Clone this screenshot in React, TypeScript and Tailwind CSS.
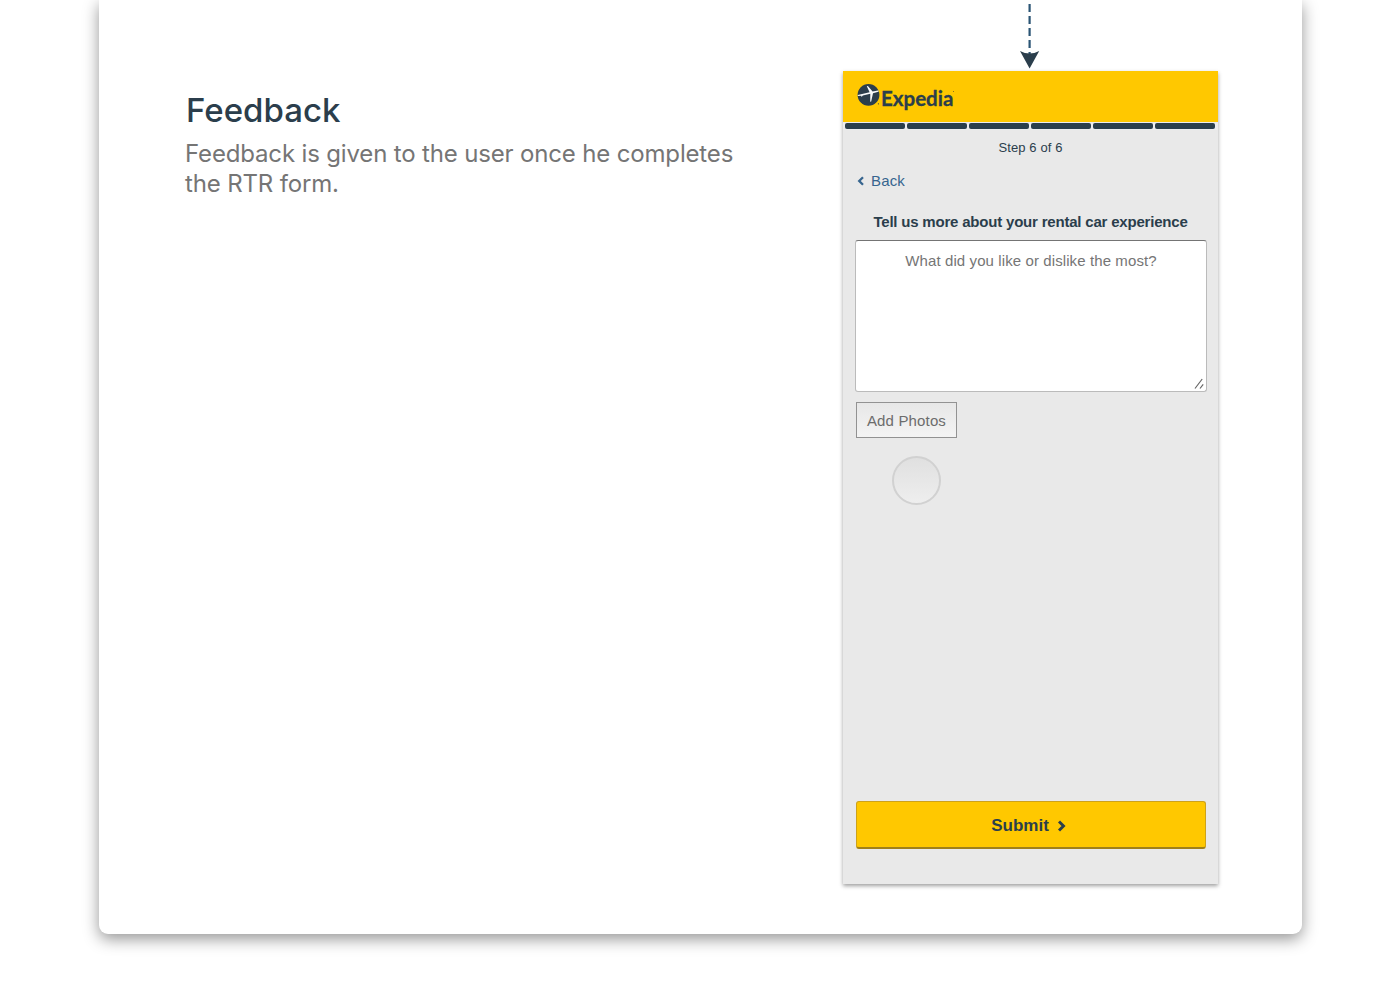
import React from "react";

function Logo() {
  return (
    <div className="flex h-[30px] items-start text-[#2b3e4c]">
      <svg width="24" height="24" viewBox="0 0 24 24" className="block shrink-0">
        <circle cx="11.5" cy="11.9" r="10.9" fill="currentColor" />
        <circle cx="21.4" cy="20.8" r="0.6" fill="currentColor" />
        <path
          d="M0.8 12.1 L12.6 9.2 L9.8 3.2 L10.9 2.9 L15.6 8.6 L21 7.6 Q22.6 7.7 21.4 8.7 L16 10.2 L14.2 18.6 L13.2 18.8 L13.3 10.8 L5.8 12.5 L4.6 14 L4.2 12.8 L0.8 13.1 Z"
          fill="#f7fafb"
        />
      </svg>
      <span className="mt-[3px] whitespace-nowrap font-['Lato',sans-serif] text-[20.5px] font-bold leading-[24px] tracking-[0px] [-webkit-text-stroke:0.3px_#2b3e4c]">
        Expedia
      </span>
      <span className="mt-[8px] h-px w-px bg-[#8a7524]" />
    </div>
  );
}

function Phone() {
  return (
    <section className="flex h-[813px] w-[375px] flex-col bg-[#e9e9e9] font-['Liberation_Sans',Arial,sans-serif] text-[#2b3e4c] shadow-[0_2px_4px_rgba(0,0,0,0.38)]">
      <header className="h-[51px] shrink-0 bg-[#ffc800] pl-[14px] pt-[12px]">
        <Logo />
      </header>
      <div className="flex h-[8px] shrink-0 gap-[2px] bg-[#ececef] pb-px pl-[2px] pr-[3px] pt-px">
        {[1, 2, 3, 4, 5, 6].map((step) => (
          <span key={step} className="flex-1 rounded-[2px] bg-[#2b3e4c]" />
        ))}
      </div>
      <p className="mt-[10px] text-center text-[13px] leading-[16px] tracking-[0.1px]">Step 6 of 6</p>
      <a className="ml-[14px] mt-[16px] flex h-[18px] items-center gap-[7px] text-[15px] leading-[18px] tracking-[0.15px] text-[#37658f]">
        <svg width="7" height="10" viewBox="0 0 7 10" className="block">
          <path d="M6 1.2 L2.2 5 L6 8.8" fill="none" stroke="currentColor" strokeWidth="2.3" />
        </svg>
        Back
      </a>
      <h2 className="mt-[23px] whitespace-nowrap text-center text-[15px] font-bold leading-[17px] tracking-[-0.2px]">
        Tell us more about your rental car experience
      </h2>
      <div className="relative ml-[12px] mt-[10px] h-[152px] w-[352px] shrink-0 rounded-[3px] border border-[#bbbbbb] border-t-[#747474] bg-white pt-[11px] text-center text-[15px] leading-[18px] tracking-[0.1px] text-[#757575]">
        What did you like or dislike the most?
        <svg width="10" height="11" viewBox="0 0 10 11" className="absolute bottom-[2px] right-[2px]">
          <path d="M1 10.5 L8.2 1 M6 10.5 L9.2 6.3" stroke="#666666" strokeWidth="1.2" />
        </svg>
      </div>
      <button className="ml-[13px] mt-[10px] h-[36px] w-[101px] shrink-0 whitespace-nowrap border border-[#929292] bg-linear-to-b from-[#e7e7e7] to-[#f4f4f4] pt-[2px] text-[15px] leading-[18px] tracking-[0.15px] text-[#6c6c6c]">
        Add Photos
      </button>
      <span className="ml-[48px] mt-[17px] flex size-[50px] shrink-0 items-center justify-center">
        <span className="size-[49px] rounded-full border-[2px] border-[#d1d1d1] bg-linear-to-b from-[#e0e0e0] to-[#eeeeee]" />
      </span>
      <button className="mb-[35px] ml-[13px] mt-auto flex h-[48px] w-[350px] shrink-0 items-center justify-center gap-[8px] rounded-[3px] border border-b-2 border-[#cda21a] border-b-[#a08018] bg-[#ffc800] pr-[5px] pt-[2px] text-[17px] font-bold">
        Submit
        <svg width="9" height="12" viewBox="0 0 9 12" className="block">
          <path d="M2 1.5 L6.5 6 L2 10.5" fill="none" stroke="currentColor" strokeWidth="2.9" />
        </svg>
      </button>
    </section>
  );
}

export default function App() {
  return (
    <div className="h-[986px] w-[1400px] overflow-hidden bg-white pl-[99px]">
      <main className="flex h-[934px] w-[1203px] rounded-b-[9px] bg-white shadow-[0_5px_16px_rgba(0,0,0,0.42)]">
        <div className="w-[744px] shrink-0 pl-[86px] pt-[90px] font-['Inter',sans-serif]">
          <h1 className="ml-px text-[33px] font-medium leading-[40px] text-[#2b3e4c]">Feedback</h1>
          <p className="mt-[9px] whitespace-nowrap text-[24px] leading-[30px] tracking-[-0.16px] text-[#757575]">
            Feedback is given to the user once he completes
            <br />
            the RTR form.
          </p>
        </div>
        <div className="flex flex-col">
          <svg width="375" height="71" viewBox="0 0 375 71" className="block">
            <path d="M186.6 4 V54" stroke="#2b5575" strokeWidth="2.2" strokeDasharray="8 4" />
            <path d="M177 51 Q186.6 56 196.2 51 L186.6 68.5 Z" fill="#2b3e4c" />
          </svg>
          <Phone />
        </div>
      </main>
    </div>
  );
}
